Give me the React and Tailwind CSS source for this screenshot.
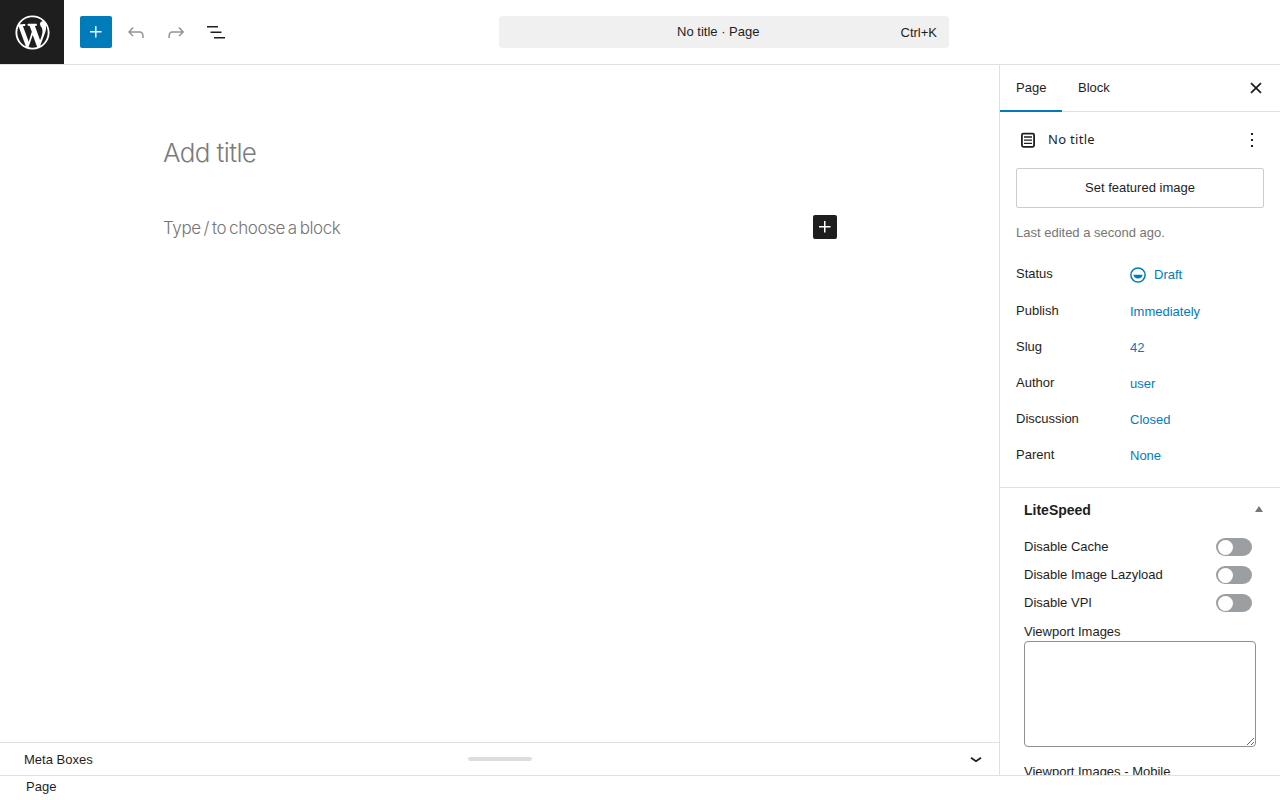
import React from "react";

const sans = "font-['Liberation_Sans',Arial,sans-serif]";

function Ico({ d, size = 24, className = "", fill = "currentColor", viewBox = "0 0 24 24" }) {
  return (
    <svg width={size} height={size} viewBox={viewBox} className={className} fill={fill} aria-hidden="true">
      <path d={d} />
    </svg>
  );
}

const PLUS = "M11 12.5V17.5H12.5V12.5H17.5V11H12.5V6H11V11H6V12.5H11Z";
const WP = "M20 10c0-5.51-4.49-10-10-10C4.48 0 0 4.49 0 10c0 5.52 4.48 10 10 10 5.51 0 10-4.48 10-10zM7.78 15.37L4.37 6.22c.55-.02 1.17-.08 1.17-.08.5-.06.44-1.13-.06-1.11 0 0-1.45.11-2.37.11-.18 0-.37 0-.58-.01C4.12 2.69 6.87 1.11 10 1.11c2.33 0 4.45.87 6.05 2.34-.68-.11-1.65.39-1.65 1.58 0 .74.45 1.36.9 2.1.35.61.55 1.36.55 2.46 0 1.49-1.4 5-1.4 5l-3.03-8.37c.54-.02.82-.17.82-.17.5-.05.44-1.25-.06-1.22 0 0-1.44.12-2.38.12-.87 0-2.33-.12-2.33-.12-.5-.03-.56 1.2-.06 1.22l.92.08 1.26 3.41zM17.41 10c.24-.64.74-1.87.43-4.25.7 1.29 1.05 2.71 1.05 4.25 0 3.29-1.73 6.24-4.4 7.78.97-2.59 1.94-5.2 2.92-7.78zM6.1 18.09C3.12 16.65 1.11 13.53 1.11 10c0-1.3.23-2.48.72-3.59C3.25 10.3 4.67 14.2 6.1 18.09zm4.03-6.63l2.58 6.98c-.86.29-1.76.45-2.71.45-.79 0-1.57-.11-2.29-.33.81-2.38 1.62-4.74 2.42-7.1z";

function Toggle() {
  return (
    <div className="w-9 h-[18px] mr-1 rounded-full bg-[#9c9fa2] flex items-center pl-[2px]">
      <div className="w-[15px] h-[15px] rounded-full bg-white" />
    </div>
  );
}

function Row({ label, value, h, icon }) {
  return (
    <div className={`flex items-start ${h}`}>
      <div className="w-[114px] text-[13px] leading-[20px] text-[#1e1e1e]">{label}</div>
      <div className="flex items-center gap-2 mt-px text-[13px] leading-[20px] text-[#007cba]">
        {icon}
        <span>{value}</span>
      </div>
    </div>
  );
}

export default function App() {
  return (
    <div className={`w-[1280px] h-[800px] flex flex-col bg-white overflow-hidden ${sans}`}>
      <header className="h-[65px] shrink-0 flex border-b border-[#e0e0e0]">
        <div className="w-16 h-16 bg-[#1e1e1e] flex items-center justify-center text-white">
          <Ico d={WP} size={41} viewBox="-2 -2 24 24" />
        </div>
        <div className="w-[435px] flex items-center pl-4 gap-2">
          <div className="w-8 h-8 rounded-[2px] bg-[#007cba] text-white flex items-center justify-center">
            <Ico d={PLUS} />
          </div>
          <div className="w-8 h-8 flex items-center justify-center text-[#949494]">
            <Ico className="translate-y-[0.5px]" d="M18.3 11.7c-.6-.6-1.4-.9-2.3-.9H6.7l2.9-3.3-1.1-1-4.5 5L8.5 16l1-1-2.7-2.7H16c.5 0 .9.2 1.3.5 1 1 1 3.4 1 4.5v.3h1.5v-.2c0-1.5 0-4.3-1.5-5.7z" />
          </div>
          <div className="w-8 h-8 flex items-center justify-center text-[#949494]">
            <Ico className="translate-y-[0.5px]" d="M15.6 6.5l-1.1 1 2.9 3.3H8c-.9 0-1.7.3-2.3.9-1.4 1.5-1.4 4.2-1.4 5.6v.2h1.5v-.3c0-1.1 0-3.5 1-4.5.3-.3.7-.5 1.3-.5h9.2L14.5 15l1.1 1.1 4.6-4.6-4.6-5z" />
          </div>
          <div className="w-8 h-8 flex items-center justify-center text-[#1e1e1e]">
            <Ico d="M3 6h11v1.5H3V6zm3.5 5.5h11V13h-11v-1.5zM21 17H10v1.5h11V17z" />
          </div>
        </div>
        <div className="w-[450px] h-8 mt-4 rounded-[4px] bg-[#f0f0f0] flex items-center px-3 text-[13px] text-[#1e1e1e]">
          <div className="flex-1 text-center pl-[25px]">No title · Page</div>
          <div className="mt-px">Ctrl+K</div>
        </div>
      </header>

      <div className="flex-1 min-h-0 flex">
        <main className="w-[999px] flex flex-col">
          <div className="flex-1 pl-[163px] pr-[162px] pt-[71px]">
            <div className="h-[34px] leading-[34px] text-[26px] font-light tracking-[-0.6px] text-[#7b7b7b] font-['Inter',sans-serif]">Add title</div>
            <div className="mt-[45px] flex items-center justify-between h-6">
              <div className="mt-[3px] text-[17px] font-light tracking-[-0.4px] [word-spacing:-1.5px] text-[#757575] font-['Inter',sans-serif]">Type / to choose a block</div>
              <div className="w-6 h-6 rounded-[2px] bg-[#1e1e1e] text-white flex items-center justify-center">
                <Ico d={PLUS} />
              </div>
            </div>
          </div>
          <div className="h-[33px] border-t border-[#e0e0e0] flex items-center pl-6 text-[13px] text-[#1e1e1e]">
            <span className="w-[444px] mt-px">Meta Boxes</span>
            <div className="w-16 h-1 rounded-[2px] bg-[#dddddd]" />
            <div className="w-[452px] flex justify-end">
              <svg width="16" height="16" viewBox="0 0 16 16" fill="none" stroke="#1e1e1e" strokeWidth="1.8" aria-hidden="true">
                <path d="M3 6.8l5 3.4 5-3.4" />
              </svg>
            </div>
          </div>
        </main>

        <aside className="w-[281px] border-l border-[#e0e0e0] overflow-hidden">
          <div className="h-[47px] flex border-b border-[#e0e0e0] text-[13px] text-[#1e1e1e]">
            <div className="w-[62px] h-[47px] px-4 flex items-center border-b-2 border-[#007cba]">Page</div>
            <div className="px-4 h-[46px] flex items-center">Block</div>
            <div className="flex-1 flex justify-end items-center pr-[10px] h-[46px]">
              <Ico d="M12 13.06l3.712 3.713 1.061-1.06L13.061 12l3.712-3.712-1.06-1.06L12 10.938 8.288 7.227l-1.061 1.06L10.939 12l-3.712 3.712 1.06 1.061L12 13.061z" size={28} className="text-[#1e1e1e]" />
            </div>
          </div>

          <div className="pl-4 pr-4 pt-4 border-b border-[#e0e0e0] h-[376px]">
            <div className="h-6 flex items-center">
              <div className="w-6 flex justify-center">
                <svg width="24" height="24" viewBox="0 0 24 24" fill="none" stroke="#1e1e1e" aria-hidden="true">
                  <rect x="5.9" y="5.6" width="12.2" height="13.2" rx="1.5" strokeWidth="1.8" />
                  <path d="M8 9h8M8 12.2h8M8 15.4h8" strokeWidth="1.3" />
                </svg>
              </div>
              <span className="ml-2 flex-1 text-[13px] tracking-[0.3px] text-[#1e1e1e] font-['Noto_Sans',sans-serif]">No title</span>
              <Ico d="M13 19h-2v-2h2v2zm0-6h-2v-2h2v2zm0-6h-2V5h2v2z" className="text-[#1e1e1e]" />
            </div>
            <div className="mt-4 h-10 rounded-[2px] border border-[#cccccc] flex items-center justify-center text-[13px] text-[#1e1e1e]">Set featured image</div>
            <div className="mt-[15px] h-5 text-[13px] leading-[20px] text-[#757575]">Last edited a second ago.</div>
            <div className="mt-[15px]">
              <Row
                label="Status"
                value="Draft"
                h="h-[37px] pt-[6px]"
                icon={
                  <svg width="16" height="16" viewBox="0 0 16 16" aria-hidden="true">
                    <circle cx="8" cy="8" r="7.1" fill="none" stroke="#007cba" strokeWidth="1.5" />
                    <path d="M3.4 7.8h9.2a4.7 4.7 0 0 1-9.2 0z" fill="#007cba" />
                  </svg>
                }
              />
              <Row label="Publish" value="Immediately" h="h-9 pt-[6px]" />
              <Row label="Slug" value="42" h="h-9 pt-[6px]" />
              <Row label="Author" value="user" h="h-9 pt-[6px]" />
              <Row label="Discussion" value="Closed" h="h-9 pt-[6px]" />
              <Row label="Parent" value="None" h="h-9 pt-[6px]" />
            </div>
          </div>

          <div className="pl-6 pr-6 text-[13px] text-[#1e1e1e]">
            <div className="h-11 flex items-center justify-between relative">
              <span className="text-[14px] font-bold">LiteSpeed</span>
              <div className="w-0 h-0 -mr-[7px] -mt-[2px] border-l-4 border-r-4 border-b-[6px] border-l-transparent border-r-transparent border-b-[#72777c]" />
            </div>
            <div className="h-[28px] flex items-center justify-between mt-[1px]"><span>Disable Cache</span><Toggle /></div>
            <div className="h-[28px] flex items-center justify-between"><span>Disable Image Lazyload</span><Toggle /></div>
            <div className="h-[28px] flex items-center justify-between"><span>Disable VPI</span><Toggle /></div>
            <div className="mt-[5px] h-5 leading-[20px] w-[232px]">Viewport Images</div>
            <textarea className="block w-[232px] h-[106px] -mt-[1px] rounded-[4px] border border-[#8c8f94] bg-white outline-none" />
            <div className="mt-[15px] h-5 leading-[20px]">Viewport Images - Mobile</div>
          </div>
        </aside>
      </div>

      <footer className="h-[25px] shrink-0 border-t border-[#e0e0e0] pl-[26px] text-[13px] leading-[22px] text-[#1e1e1e]">Page</footer>
    </div>
  );
}
